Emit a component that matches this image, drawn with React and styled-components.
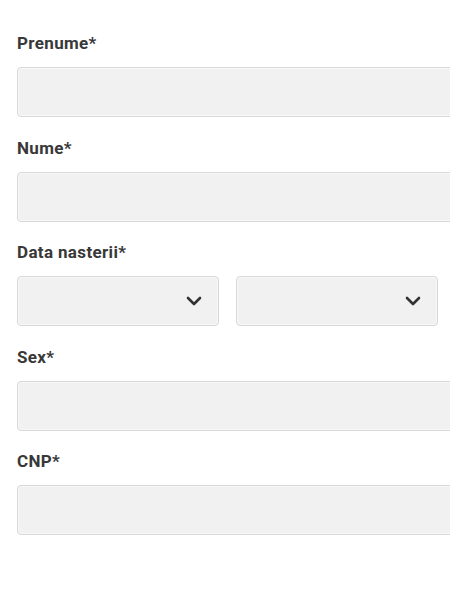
import React from 'react';
import styled, { createGlobalStyle } from 'styled-components';

const GlobalStyle = createGlobalStyle`
  html, body {
    margin: 0;
    padding: 0;
    background: #fff;
    overflow: hidden;
    font-family: Roboto, "Liberation Sans", Arial, sans-serif;
  }
`;

const Form = styled.form`
  padding: 33px 0 40px 17px;
  display: flex;
  flex-direction: column;
  gap: 20.5px;
  overflow: hidden;
`;

const Field = styled.div`
  display: flex;
  flex-direction: column;
  min-width: 0;
`;

const Label = styled.label`
  font-size: 17px;
  line-height: 20px;
  font-weight: 700;
  letter-spacing: 0.35px;
  color: #383838;
  margin-bottom: 14px;
`;

const Input = styled.input`
  box-sizing: border-box;
  width: calc(100% + 12px);
  height: 50px;
  border: 1px solid #d8d8d8;
  border-radius: 4px;
  background: #f1f1f1;
  box-shadow: inset 0 0 0 1px #f8f8f8;
  outline: none;
  font: inherit;
  padding: 0 14px;
`;

const SelectRow = styled.div`
  display: flex;
  gap: 17px;
`;

const SelectBox = styled.div`
  box-sizing: border-box;
  width: 202px;
  height: 50px;
  border: 1px solid #d8d8d8;
  border-radius: 4px;
  background: #f1f1f1;
  box-shadow: inset 0 0 0 1px #f8f8f8;
  display: flex;
  align-items: center;
  justify-content: flex-end;
  padding-right: 16px;
`;

const Chevron = () => (
  <svg width="16" height="10" viewBox="0 0 16 10" aria-hidden="true">
    <polyline
      points="2,2 8,8 14,2"
      fill="none"
      stroke="#333"
      strokeWidth="2.6"
      strokeLinecap="round"
      strokeLinejoin="round"
    />
  </svg>
);

const TextField = ({ label }) => (
  <Field>
    <Label>{label}</Label>
    <Input type="text" />
  </Field>
);

export default function App() {
  return (
    <>
      <GlobalStyle />
      <Form>
        <TextField label="Prenume*" />
        <TextField label="Nume*" />
        <Field>
          <Label>Data nasterii*</Label>
          <SelectRow>
            <SelectBox>
              <Chevron />
            </SelectBox>
            <SelectBox>
              <Chevron />
            </SelectBox>
          </SelectRow>
        </Field>
        <TextField label="Sex*" />
        <TextField label="CNP*" />
      </Form>
    </>
  );
}
